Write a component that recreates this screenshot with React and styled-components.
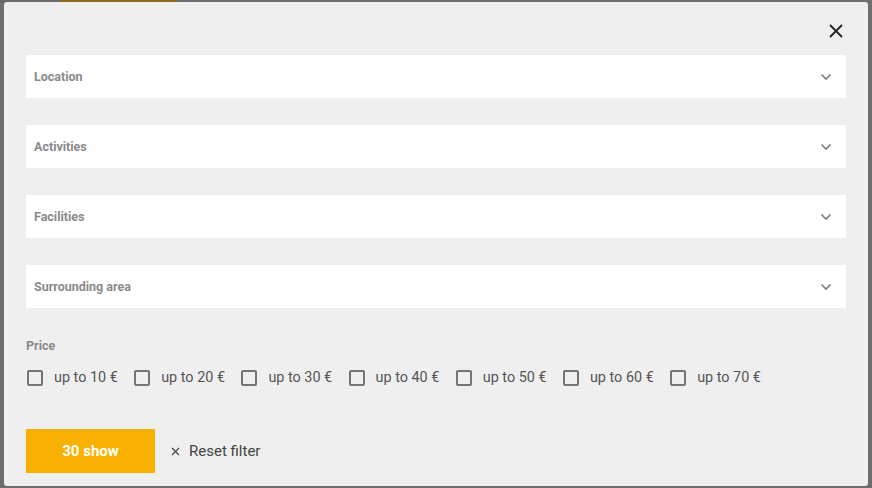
import styled, { createGlobalStyle } from "styled-components";

const GlobalStyle = createGlobalStyle`
  html, body {
    margin: 0;
    padding: 0;
    width: 872px;
    height: 488px;
    overflow: hidden;
    background: #6e6e6e;
    font-family: Roboto, "Liberation Sans", sans-serif;
  }
`;

const sections = ["Location", "Activities", "Facilities", "Surrounding area"];
const prices = [10, 20, 30, 40, 50, 60, 70];

function Chevron() {
  return (
    <svg width="12" height="8" viewBox="0 0 12 8" fill="none">
      <path d="M1.5 1.5 L6 6 L10.5 1.5" stroke="#7a7a7a" strokeWidth="1.6" />
    </svg>
  );
}

function CloseIcon() {
  return (
    <svg width="14" height="14" viewBox="0 0 14 14" fill="none">
      <path d="M1 1 L13 13 M13 1 L1 13" stroke="#222" strokeWidth="1.8" />
    </svg>
  );
}

function ResetIcon() {
  return (
    <svg width="9" height="9" viewBox="0 0 9 9" fill="none">
      <path d="M1 1 L8 8 M8 1 L1 8" stroke="#444" strokeWidth="1.2" />
    </svg>
  );
}

function App() {
  return (
    <>
      <GlobalStyle />
      <Backdrop>
        <Modal>
          <Header>
            <CloseButton aria-label="close">
              <CloseIcon />
            </CloseButton>
          </Header>
          <Sections>
            {sections.map((name) => (
              <Panel key={name}>
                <PanelTitle>{name}</PanelTitle>
                <Chevron />
              </Panel>
            ))}
          </Sections>
          <PriceBlock>
            <PriceLabel>Price</PriceLabel>
            <PriceRow>
              {prices.map((p) => (
                <Option key={p}>
                  <Box />
                  <span>up to {p} €</span>
                </Option>
              ))}
            </PriceRow>
          </PriceBlock>
          <Footer>
            <ShowButton>30 show</ShowButton>
            <ResetButton>
              <ResetIcon /> Reset filter
            </ResetButton>
          </Footer>
        </Modal>
      </Backdrop>
    </>
  );
}

const Backdrop = styled.div`
  width: 872px;
  height: 488px;
  padding: 2px 4px 0 4px;
  box-sizing: border-box;
  background:
    linear-gradient(90deg, #6a6a6a 0, #6a6a6a 60px, #8a6a1c 60px, #8a6a1c 177px, #707070 177px) top / 100% 2px no-repeat,
    #6e6e6e;
`;

const Modal = styled.div`
  width: 864px;
  height: 484px;
  background: #efefef;
  border-radius: 3px;
  padding: 0 22px;
  box-sizing: border-box;
  overflow: hidden;
`;

const Header = styled.div`
  height: 53px;
  display: flex;
  justify-content: flex-end;
  align-items: flex-start;
`;

const CloseButton = styled.button`
  border: none;
  background: none;
  padding: 0;
  margin: 21px 2px 0 0;
  width: 16px;
  height: 16px;
  display: flex;
  align-items: center;
  justify-content: center;
  cursor: pointer;
`;

const Sections = styled.div`
  display: flex;
  flex-direction: column;
  gap: 27px;
`;

const Panel = styled.div`
  height: 43px;
  background: #fff;
  display: flex;
  align-items: center;
  justify-content: space-between;
  padding: 0 14px 0 8px;
`;

const PanelTitle = styled.span`
  font-size: 12.5px;
  font-weight: 700;
  color: #8a8a8a;
`;

const PriceBlock = styled.div`
  padding-top: 31px;
`;

const PriceLabel = styled.div`
  font-size: 12.5px;
  font-weight: 700;
  color: #8a8a8a;
  line-height: 14px;
`;

const PriceRow = styled.div`
  display: flex;
  align-items: center;
  margin-top: 17px;
  padding-left: 1px;
`;

const Option = styled.label`
  display: flex;
  align-items: center;
  gap: 11px;
  margin-right: 16.4px;
  font-size: 14.4px;
  color: #555;
  line-height: 16px;
`;

const Box = styled.span`
  width: 16px;
  height: 16px;
  box-sizing: border-box;
  border: 2px solid #757575;
  border-radius: 2px;
`;

const Footer = styled.div`
  display: flex;
  align-items: center;
  gap: 16px;
  margin-top: 43px;
`;

const ShowButton = styled.button`
  width: 129px;
  height: 44px;
  border: none;
  background: #f8b100;
  color: #fff;
  font-family: Roboto, "Liberation Sans", sans-serif;
  font-size: 15px;
  font-weight: 700;
  cursor: pointer;
`;

const ResetButton = styled.button`
  border: none;
  background: none;
  padding: 0;
  font-family: Roboto, "Liberation Sans", sans-serif;
  font-size: 15px;
  color: #444;
  display: flex;
  align-items: center;
  gap: 9px;
  cursor: pointer;
`;

export default App;
